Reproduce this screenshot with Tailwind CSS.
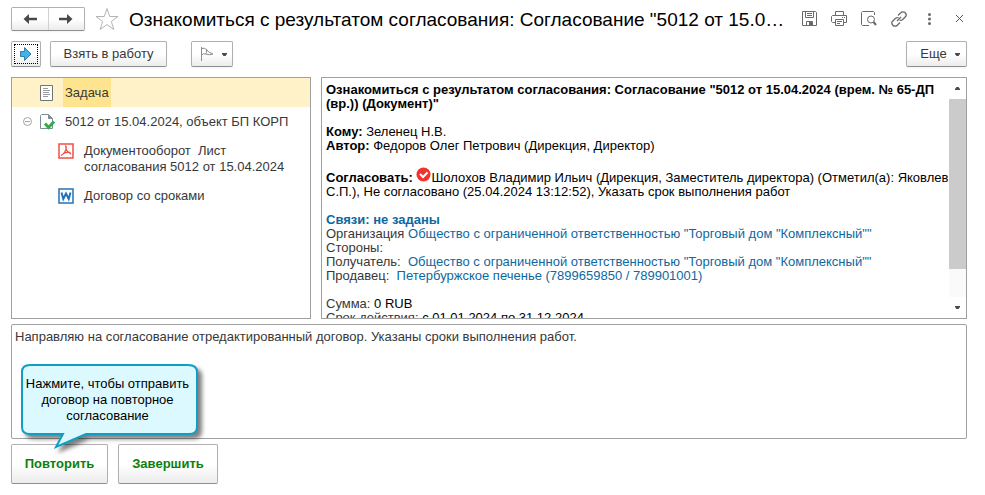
<!DOCTYPE html>
<html lang="ru">
<head>
    <meta charset="UTF-8">
    <meta name="viewport" content="width=device-width, initial-scale=1.0">
    <script src="https://cdn.jsdelivr.net/npm/@tailwindcss/browser@4"></script>
    <title>Ознакомиться с результатом согласования</title>
</head>
<body class="bg-white pt-[7px] pl-[11px] pr-[18px] font-['Liberation_Sans',Arial,sans-serif] text-[13px] leading-4 text-[#383838]">

    <!-- Title bar -->
    <header class="flex items-center h-6">
        <div class="flex shrink-0 w-[74px] h-6 rounded-xs border border-[#b0b0b0] border-b-[#8f8f8f] bg-linear-to-b from-white from-50% to-[#ececec] shadow-xs">
            <button type="button" aria-label="Назад" class="flex flex-1 items-center justify-center border-r border-[#d0d0d0]">
                <svg class="w-4 h-3" viewBox="0 0 16 12"><path d="M7 1 1.500 6 7 11V7.300h8V4.700H7z" fill="#4a4a4a"/></svg>
            </button>
            <button type="button" aria-label="Вперед" class="flex flex-1 items-center justify-center">
                <svg class="w-4 h-3" viewBox="0 0 16 12"><path d="M9 1l5.500 5L9 11V7.300H1V4.700h8z" fill="#4a4a4a"/></svg>
            </button>
        </div>
        <button type="button" aria-label="В избранное" class="shrink-0 ml-[10px]">
            <svg class="w-6 h-6" viewBox="0 0 24 24"><path d="M12 1.500l2.700 8h8.300l-6.700 5 2.600 8L12 17.600 5.100 22.500l2.600-8L1 9.500h8.300z" fill="#fff" stroke="#b4b4b4"/></svg>
        </button>
        <h1 class="flex-1 min-w-0 truncate ml-[10px] pt-px text-[19px] leading-6 text-black">Ознакомиться с результатом согласования: Согласование "5012 от 15.04.2024 (врем. № 65-ДП (вр.)) (Документ)"</h1>
        <div class="flex shrink-0 items-center gap-[14px] ml-3">
            <button type="button" aria-label="Сохранить">
                <svg class="w-4 h-4" viewBox="0 0 16 16" fill="none" stroke="#6a6a6a"><path d="M1.500.5h13l1 1v13h-14z"/><path d="M4.500.5v6h8v-6M6 2.500h5M6 4.500h5"/><path d="M5.500 14.500v-4h6v4"/><path d="M8 11h3v3H8z" fill="#6a6a6a" stroke="none"/></svg>
            </button>
            <button type="button" aria-label="Печать">
                <svg class="w-4 h-4" viewBox="0 0 16 16" fill="none" stroke="#6a6a6a"><path d="M4.500 4.500v-4h8v4M4.500 11.500h-3l-1-1v-5l1-1h14v7h-3"/><path d="M4.500 8.500h8v6h-8zM6 10.500h5M6 12.500h3M11 6.500h1M13 6.500h1"/></svg>
            </button>
            <button type="button" aria-label="Просмотр">
                <svg class="w-4 h-4" viewBox="0 0 16 16" fill="none" stroke="#6a6a6a"><path d="M13.500 4V1.500l-1-1h-11l-1 1v12l1 1H8"/><circle cx="10" cy="8.500" r="3.500"/><path d="M12.500 11l2.500 3" stroke-width="2"/></svg>
            </button>
            <button type="button" aria-label="Ссылка">
                <svg class="w-4 h-4" viewBox="0 0 16 16" fill="none" stroke="#6a6a6a" stroke-width="1.300"><path d="M7 4.500 9.700 1.800a3 3 0 0 1 4.500 0 3 3 0 0 1 0 4.200l-2.700 2.700q-1.500 1-3 .3"/><path d="M9 11.500l-2.700 2.700a3 3 0 0 1-4.500 0 3 3 0 0 1 0-4.200l2.700-2.700q1.500-1 3-.3"/><path d="M6 10l4-4"/></svg>
            </button>
            <button type="button" aria-label="Меню">
                <svg class="w-4 h-4" viewBox="0 0 16 16" fill="#6a6a6a"><circle cx="8.500" cy="3.500" r="1.500"/><circle cx="8.500" cy="8" r="1.500"/><circle cx="8.500" cy="12.500" r="1.500"/></svg>
            </button>
            <button type="button" aria-label="Закрыть">
                <svg class="w-4 h-4" viewBox="0 0 16 16" stroke="#555"><path d="M5 4l7 7M12 4l-7 7"/></svg>
            </button>
        </div>
    </header>

    <!-- Command bar -->
    <div class="flex items-center h-[26px] mt-[10px]">
        <button type="button" aria-label="Перенаправить" class="w-[30px] h-[26px] p-[2px] rounded-xs border border-[#b0b0b0] border-b-[#8f8f8f] bg-linear-to-b from-white from-50% to-[#ececec] shadow-xs">
            <span class="flex items-center justify-center h-full border border-dotted border-black">
                <svg class="w-4 h-4" viewBox="0 0 16 16"><path d="M2.500 5.500h4v-4l6.500 6.500-6.500 6.500v-4h-4z" fill="#3fb4ec" stroke="#3a7ca0"/></svg>
            </span>
        </button>
        <button type="button" class="w-[117px] h-[26px] ml-[9px] rounded-xs border border-[#b0b0b0] border-b-[#8f8f8f] bg-linear-to-b from-white from-50% to-[#ececec] shadow-xs">Взять в работу</button>
        <button type="button" aria-label="Флаг" class="flex items-center justify-center gap-[8px] w-[42px] h-[26px] ml-6 pl-[2px] rounded-xs border border-[#b0b0b0] border-b-[#8f8f8f] bg-linear-to-b from-white from-50% to-[#ececec] shadow-xs">
            <svg class="w-[14px] h-[14px]" viewBox="0 0 14 14" fill="none" stroke="#8c8c8c"><path d="M1.500 0v14M1.500 1.500q3-1 5 1v3l-1 1.500q-2-1-4 1M6.500 2.500q1.500 3 6.500 4.500-3 1.500-7.500 0"/></svg>
            <svg class="w-[5px] h-[3px]" viewBox="0 0 5 3"><path d="M0 0h5v1L3.500 3h-2L0 1z" fill="#4a4a4a"/></svg>
        </button>
        <button type="button" class="flex items-center justify-center gap-[8px] w-[61px] h-[26px] ml-auto pl-[7px] rounded-xs border border-[#b0b0b0] border-b-[#8f8f8f] bg-linear-to-b from-white from-50% to-[#ececec] shadow-xs">
            Еще
            <svg class="w-[5px] h-[3px]" viewBox="0 0 5 3"><path d="M0 0h5v1L3.500 3h-2L0 1z" fill="#4a4a4a"/></svg>
        </button>
    </div>

    <main class="flex gap-[10px] h-[242px] mt-[10px]">
        <!-- Task tree -->
        <ul class="shrink-0 w-[300px] border border-[#a0a0a0]">
            <li class="flex items-center h-[29px] pl-[27px] bg-[#fff2c8]">
                <svg class="w-4 h-4" viewBox="0 0 16 16" fill="none" stroke="#6e7478"><path d="M1.500.5h12v15h-12z" fill="#fff"/><path d="M4 3.500h5M4 5.500h7M4 7.500h6M4 9.500h7M4 11.500h5" stroke="#999"/></svg>
                <span class="flex items-center h-full px-[2px] ml-2 bg-[#ffe48f]">Задача</span>
            </li>
            <li>
                <div class="flex items-center h-[29px] pl-[11px]">
                    <svg class="w-[9px] h-[9px]" viewBox="0 0 9 9" fill="none" stroke="#a4a4a4"><circle cx="4.500" cy="4.500" r="4"/><path d="M2 4.500h5"/></svg>
                    <svg class="w-4 h-4 ml-[7px]" viewBox="0 0 16 16"><path d="M9.500.5h-7l-1 1v13h12v-10z" fill="#fff" stroke="#7d8e96"/><path d="M9.500.5v4h4z" fill="#7d8e96" stroke="#7d8e96"/><path d="M6 9.500l3.500 4L15 7.500" fill="none" stroke="#35ad49" stroke-width="3"/></svg>
                    <span class="ml-[10px]">5012 от 15.04.2024, объект БП КОРП</span>
                </div>
                <ul>
                    <li class="flex items-start h-[45px] pl-[46px] pt-[7px]">
                        <svg class="w-4 h-4 shrink-0" viewBox="0 0 16 16" fill="none" stroke="#ee5243"><path d="M1 1h14v14H1z" stroke-width="1.500"/><path d="M7 3q1.500 0 1 2.500Q7.500 10 3 12.500M7.500 5.500Q9 9 13 11M5 10.500q3-1.500 7.500-1" stroke-width="1.400"/></svg>
                        <span class="ml-[10px] whitespace-pre">Документооборот  Лист
согласования 5012 от 15.04.2024</span>
                    </li>
                    <li class="flex items-center h-[29px] pl-[46px]">
                        <svg class="w-4 h-4" viewBox="0 0 16 16" fill="none" stroke="#2372b9"><path d="M1 1h14v14H1z" stroke-width="1.500"/><path d="M3.500 4.500l1.800 6.500L8 5.500l2.700 5.500 1.800-6.500" stroke-width="2"/></svg>
                        <span class="ml-[10px]">Договор со сроками</span>
                    </li>
                </ul>
            </li>
        </ul>

        <!-- Task description -->
        <section class="flex flex-1 min-w-0 border border-[#a0a0a0]">
            <div class="flex-1 min-w-0 overflow-hidden pl-1 pt-[5px] leading-[14px] text-black">
                <p class="font-bold">Ознакомиться с результатом согласования: Согласование "5012 от 15.04.2024 (врем. № 65-ДП (вр.)) (Документ)"</p>
                <p class="mt-[14px]"><b>Кому:</b> Зеленец Н.В.</p>
                <p><b>Автор:</b> Федоров Олег Петрович (Дирекция, Директор)</p>
                <p class="mt-[14px] whitespace-nowrap"><b>Согласовать:</b> <svg class="inline w-[15px] h-[15px] align-baseline" viewBox="0 0 15 15"><circle cx="7.500" cy="7.500" r="7" fill="#f3322f"/><path d="M4 7l3 3 4.500-4.500" fill="none" stroke="#fff" stroke-width="2"/></svg>Шолохов Владимир Ильич (Дирекция, Заместитель директора) (Отметил(а): Яковлев<br>С.П.), Не согласовано (25.04.2024 13:12:52), Указать срок выполнения работ</p>
                <div class="mt-[14px] text-[#383838]">
                    <p><a href="#" class="font-bold text-[#0e68a0]">Связи: не заданы</a></p>
                    <p>Организация <a href="#" class="text-[#0e68a0]">Общество с ограниченной ответственностью "Торговый дом "Комплексный""</a></p>
                    <p>Стороны:</p>
                    <p>Получатель:&nbsp; <a href="#" class="text-[#0e68a0]">Общество с ограниченной ответственностью "Торговый дом "Комплексный""</a></p>
                    <p>Продавец:&nbsp; <a href="#" class="text-[#0e68a0]">Петербуржское печенье (7899659850 / 789901001)</a></p>
                </div>
                <div class="mt-[14px] text-[#383838]">
                    <p>Сумма: <span class="text-black">0 RUB</span></p>
                    <p>Срок действия: <span class="text-black">с 01.01.2024 по 31.12.2024</span></p>
                </div>
            </div>
            <div class="flex flex-col shrink-0 w-[17px]">
                <div class="flex items-center justify-center h-[21px]"><svg class="w-[5px] h-[3px]" viewBox="0 0 5 3"><path d="M0 3h5V2L3.500 0h-2L0 2z" fill="#4a4a4a"/></svg></div>
                <div class="flex-1 bg-[#fafafa]"><div class="h-[86%] bg-[#cbcbcb]"></div></div>
                <div class="flex items-center justify-center h-[21px]"><svg class="w-[5px] h-[3px]" viewBox="0 0 5 3"><path d="M0 0h5v1L3.500 3h-2L0 1z" fill="#4a4a4a"/></svg></div>
            </div>
        </section>
    </main>

    <!-- Comment -->
    <div class="relative mt-[5px]">
        <textarea aria-label="Комментарий" class="block w-full h-[115px] px-[3px] py-1 resize-none rounded-xs border border-[#a0a0a0] outline-none">Направляю на согласование отредактированный договор. Указаны сроки выполнения работ.</textarea>
        <div class="absolute left-2 top-[39px] w-[182px] h-[90px] pt-[13px] pr-[5px] text-center text-black pointer-events-none">
            <svg class="absolute inset-0 w-full h-full overflow-visible drop-shadow-[4px_4px_2px_rgb(0_0_0/0.5)]" viewBox="0 0 182 90"><path d="M11 2h158q9 0 9 7v55q0 7-8 7H67L37 84l7-13H11q-8 0-8-7V9q0-7 8-7z" fill="#dcf9ff" stroke="#109fc4" stroke-width="2"/></svg>
            <p class="relative">Нажмите, чтобы отправить<br>договор на повторное<br>согласование</p>
        </div>
    </div>

    <!-- Actions -->
    <footer class="flex gap-[10px] mt-[5px] font-bold text-[#0a820a]">
        <button type="button" class="w-[97px] h-10 rounded-xs border border-[#b0b0b0] border-b-[#8f8f8f] bg-linear-to-b from-white from-50% to-[#ececec] shadow-xs">Повторить</button>
        <button type="button" class="w-[100px] h-10 rounded-xs border border-[#b0b0b0] border-b-[#8f8f8f] bg-linear-to-b from-white from-50% to-[#ececec] shadow-xs">Завершить</button>
    </footer>

</body>
</html>
